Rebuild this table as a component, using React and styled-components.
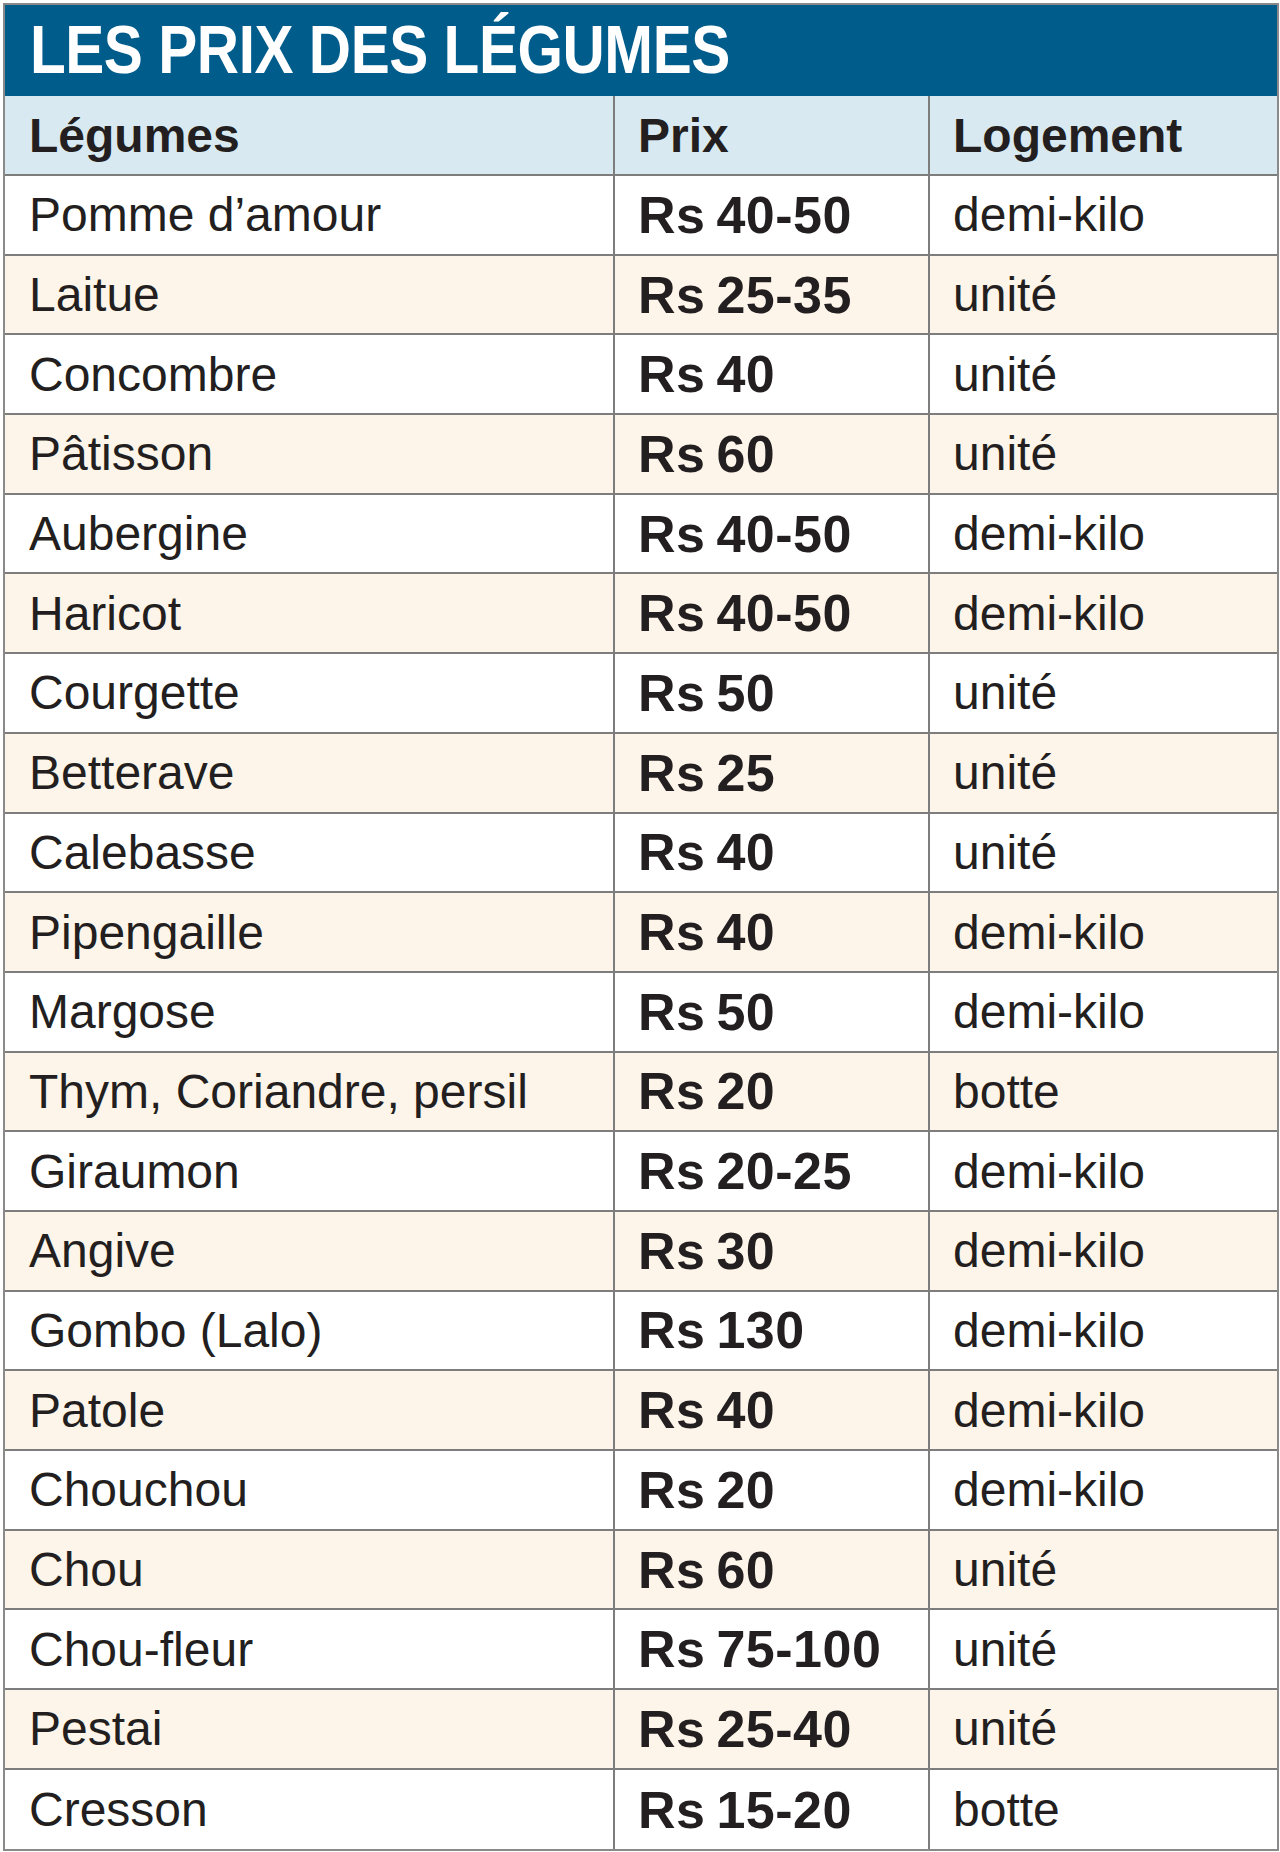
import React from "react";
import styled, { createGlobalStyle } from "styled-components";

const GlobalStyle = createGlobalStyle`
  body {
    margin: 0;
    background: #ffffff;
    font-family: "Liberation Sans", Arial, sans-serif;
  }
`;

const Page = styled.div`
  padding: 3px 1px 2px 3px;
`;

const Box = styled.div`
  width: 1276px;
  box-sizing: border-box;
  border: 2px solid #8a8a8a;
  background: #ffffff;
`;

const Title = styled.h1`
  margin: 0;
  height: 91px;
  box-sizing: border-box;
  padding: 0 0 4px 25px;
  display: flex;
  align-items: center;
  background: #005c8b;
  color: #ffffff;
  font-family: "Liberation Sans", Arial, sans-serif;
  font-weight: 700;
  font-size: 68px;
  letter-spacing: -0.5px;
`;

/* the print title uses a condensed face; squeeze the regular one to match */
const TitleText = styled.span`
  display: inline-block;
  transform: scaleX(0.86);
  transform-origin: left center;
  white-space: nowrap;
`;

const Grid = styled.div`
  display: grid;
  grid-template-columns: 610px 315px 1fr;
`;

const Cell = styled.div`
  height: ${(p) => (p.$head ? "80px" : "79.7px")};
  box-sizing: border-box;
  display: flex;
  align-items: center;
  padding-left: ${(p) => (p.$col === 0 ? "24px" : "23px")};
  border-right: ${(p) => (p.$col === 2 ? "none" : "2px solid #7d7d7d")};
  border-bottom: ${(p) => (p.$last ? "none" : "2px solid #7d7d7d")};
  background: ${(p) => (p.$head ? "#d9e9f1" : p.$alt ? "#fdf4ea" : "#ffffff")};
  color: #231f20;
  font-size: ${(p) => (p.$price ? "52px" : "48px")};
  font-weight: ${(p) => (p.$bold ? 700 : 400)};
  letter-spacing: ${(p) => (p.$price ? "0.5px" : "0")};
  word-spacing: ${(p) => (p.$price ? "-4px" : "0")};
  white-space: nowrap;
`;

const rows = [
  ["Pomme d\u2019amour", "Rs 40-50", "demi-kilo"],
  ["Laitue", "Rs 25-35", "unité"],
  ["Concombre", "Rs 40", "unité"],
  ["Pâtisson", "Rs 60", "unité"],
  ["Aubergine", "Rs 40-50", "demi-kilo"],
  ["Haricot", "Rs 40-50", "demi-kilo"],
  ["Courgette", "Rs 50", "unité"],
  ["Betterave", "Rs 25", "unité"],
  ["Calebasse", "Rs 40", "unité"],
  ["Pipengaille", "Rs 40", "demi-kilo"],
  ["Margose", "Rs 50", "demi-kilo"],
  ["Thym, Coriandre, persil", "Rs 20", "botte"],
  ["Giraumon", "Rs 20-25", "demi-kilo"],
  ["Angive", "Rs 30", "demi-kilo"],
  ["Gombo (Lalo)", "Rs 130", "demi-kilo"],
  ["Patole", "Rs 40", "demi-kilo"],
  ["Chouchou", "Rs 20", "demi-kilo"],
  ["Chou", "Rs 60", "unité"],
  ["Chou-fleur", "Rs 75-100", "unité"],
  ["Pestai", "Rs 25-40", "unité"],
  ["Cresson", "Rs 15-20", "botte"],
];

export default function App() {
  return (
    <>
      <GlobalStyle />
      <Page>
        <Box>
          <Title>
            <TitleText>LES PRIX DES LÉGUMES</TitleText>
          </Title>
          <Grid>
            {["Légumes", "Prix", "Logement"].map((h, i) => (
              <Cell key={h} $head $bold $col={i}>
                {h}
              </Cell>
            ))}
            {rows.map((r, ri) =>
              r.map((v, ci) => (
                <Cell
                  key={ri + "-" + ci}
                  $col={ci}
                  $alt={ri % 2 === 1}
                  $bold={ci === 1}
                  $price={ci === 1}
                  $last={ri === rows.length - 1}
                >
                  {v}
                </Cell>
              ))
            )}
          </Grid>
        </Box>
      </Page>
    </>
  );
}
